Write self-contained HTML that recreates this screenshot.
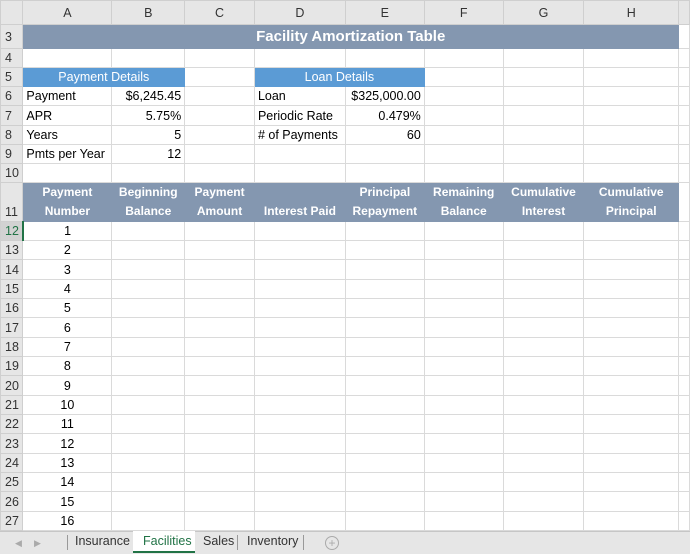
<!DOCTYPE html>
<html><head><meta charset="utf-8"><style>
*{margin:0;padding:0;box-sizing:border-box}
body{width:690px;height:554px;overflow:hidden;background:#fff;font-family:"Liberation Sans",Arial,sans-serif;font-size:12.5px;color:#000;position:relative}
table{border-collapse:collapse;table-layout:fixed;position:absolute;left:0;top:0}
td{border:1px solid #dadada;padding:0 3px;white-space:nowrap;overflow:hidden;vertical-align:middle}
tr.h td{background:#e6e6e6;text-align:center;color:#333;border-color:#cfcfcf;font-size:12.5px}
td.rh{background:#e6e6e6;color:#333;text-align:left;padding-left:4px;border-color:#cfcfcf}
td.sel{background:#d2d2d2;color:#217346;border-right:2px solid #217346}
.title{background:#8497b0;color:#fff;font-weight:bold;font-size:15px;text-align:center;border-color:#8497b0}
.pd{background:#5b9bd5;color:#fff;text-align:center;border-color:#5b9bd5}
.hd td.b{background:#8497b0;color:#fff;font-weight:bold;font-size:12px;text-align:center;border-color:#8497b0;line-height:19px;vertical-align:bottom;white-space:normal}
.r{text-align:right}.c{text-align:center}
.tabs{position:absolute;left:0;top:531px;width:690px;height:23px;background:#e6e6e6;border-top:1px solid #c6c6c6;font-size:12.5px;color:#333}
.tabs span{position:absolute;top:2px}
</style></head><body>
<table>
<colgroup><col style="width:22px"><col style="width:89px"><col style="width:73px"><col style="width:70px"><col style="width:91px"><col style="width:79px"><col style="width:79px"><col style="width:81px"><col style="width:95px"><col style="width:11px"></colgroup>
<tr class="h" style="height:24px"><td style="background:#e6e6e6"></td><td>A</td><td>B</td><td>C</td><td>D</td><td>E</td><td>F</td><td>G</td><td>H</td><td></td></tr>
<tr style="height:24px"><td class="rh">3</td><td colspan="8" class="title">Facility Amortization Table</td><td></td></tr>
<tr style="height:19px"><td class="rh">4</td><td></td><td></td><td></td><td></td><td></td><td></td><td></td><td></td><td></td></tr>
<tr style="height:19px"><td class="rh">5</td><td colspan="2" class="pd">Payment Details</td><td></td><td colspan="2" class="pd">Loan Details</td><td></td><td></td><td></td><td></td></tr>
<tr style="height:19px"><td class="rh">6</td><td>Payment</td><td class="r">$6,245.45</td><td></td><td>Loan</td><td class="r">$325,000.00</td><td></td><td></td><td></td><td></td></tr>
<tr style="height:20px"><td class="rh">7</td><td>APR</td><td class="r">5.75%</td><td></td><td>Periodic Rate</td><td class="r">0.479%</td><td></td><td></td><td></td><td></td></tr>
<tr style="height:19px"><td class="rh">8</td><td>Years</td><td class="r">5</td><td></td><td># of Payments</td><td class="r">60</td><td></td><td></td><td></td><td></td></tr>
<tr style="height:19px"><td class="rh">9</td><td>Pmts per Year</td><td class="r">12</td><td></td><td></td><td></td><td></td><td></td><td></td><td></td></tr>
<tr style="height:19px"><td class="rh">10</td><td></td><td></td><td></td><td></td><td></td><td></td><td></td><td></td><td></td></tr>
<tr class="hd" style="height:39px"><td class="rh" style="vertical-align:bottom;padding-bottom:2px">11</td><td class="b">Payment<br>Number</td><td class="b">Beginning<br>Balance</td><td class="b">Payment<br>Amount</td><td class="b">Interest Paid</td><td class="b">Principal<br>Repayment</td><td class="b">Remaining<br>Balance</td><td class="b">Cumulative<br>Interest</td><td class="b">Cumulative<br>Principal</td><td></td></tr>
<tr style="height:19px"><td class="rh sel">12</td><td class="c">1</td><td></td><td></td><td></td><td></td><td></td><td></td><td></td><td></td></tr>
<tr style="height:19px"><td class="rh">13</td><td class="c">2</td><td></td><td></td><td></td><td></td><td></td><td></td><td></td><td></td></tr>
<tr style="height:20px"><td class="rh">14</td><td class="c">3</td><td></td><td></td><td></td><td></td><td></td><td></td><td></td><td></td></tr>
<tr style="height:19px"><td class="rh">15</td><td class="c">4</td><td></td><td></td><td></td><td></td><td></td><td></td><td></td><td></td></tr>
<tr style="height:19px"><td class="rh">16</td><td class="c">5</td><td></td><td></td><td></td><td></td><td></td><td></td><td></td><td></td></tr>
<tr style="height:20px"><td class="rh">17</td><td class="c">6</td><td></td><td></td><td></td><td></td><td></td><td></td><td></td><td></td></tr>
<tr style="height:19px"><td class="rh">18</td><td class="c">7</td><td></td><td></td><td></td><td></td><td></td><td></td><td></td><td></td></tr>
<tr style="height:19px"><td class="rh">19</td><td class="c">8</td><td></td><td></td><td></td><td></td><td></td><td></td><td></td><td></td></tr>
<tr style="height:20px"><td class="rh">20</td><td class="c">9</td><td></td><td></td><td></td><td></td><td></td><td></td><td></td><td></td></tr>
<tr style="height:19px"><td class="rh">21</td><td class="c">10</td><td></td><td></td><td></td><td></td><td></td><td></td><td></td><td></td></tr>
<tr style="height:19px"><td class="rh">22</td><td class="c">11</td><td></td><td></td><td></td><td></td><td></td><td></td><td></td><td></td></tr>
<tr style="height:20px"><td class="rh">23</td><td class="c">12</td><td></td><td></td><td></td><td></td><td></td><td></td><td></td><td></td></tr>
<tr style="height:19px"><td class="rh">24</td><td class="c">13</td><td></td><td></td><td></td><td></td><td></td><td></td><td></td><td></td></tr>
<tr style="height:19px"><td class="rh">25</td><td class="c">14</td><td></td><td></td><td></td><td></td><td></td><td></td><td></td><td></td></tr>
<tr style="height:20px"><td class="rh">26</td><td class="c">15</td><td></td><td></td><td></td><td></td><td></td><td></td><td></td><td></td></tr>
<tr style="height:19px"><td class="rh">27</td><td class="c">16</td><td></td><td></td><td></td><td></td><td></td><td></td><td></td><td></td></tr>
</table>
<div class="tabs">
<span style="left:15px;color:#aaa;font-size:9px;top:6px">◀</span>
<span style="left:34px;color:#aaa;font-size:9px;top:6px">▶</span>
<div style="position:absolute;left:67px;top:3px;width:1px;height:15px;background:#999"></div>
<span style="left:75px">Insurance</span>
<div style="position:absolute;left:133px;top:-1px;width:62px;height:22px;background:#fff;border-bottom:2px solid #217346"></div>
<span style="left:143px;color:#217346">Facilities</span>
<span style="left:203px">Sales</span>
<div style="position:absolute;left:237px;top:3px;width:1px;height:15px;background:#999"></div>
<span style="left:247px">Inventory</span>
<div style="position:absolute;left:303px;top:3px;width:1px;height:15px;background:#999"></div>
<div style="position:absolute;left:325px;top:4px;width:14px;height:14px;border:1px solid #aaa;border-radius:50%;color:#aaa;font-size:12px;line-height:12px;text-align:center">+</div>
</div>
</body></html>
